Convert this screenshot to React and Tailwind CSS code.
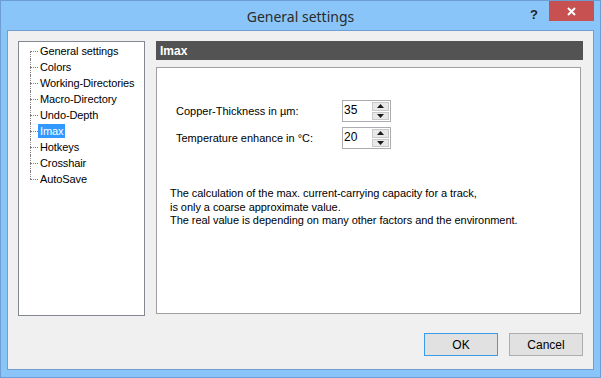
import React from "react";

const items = [
  "General settings",
  "Colors",
  "Working-Directories",
  "Macro-Directory",
  "Undo-Depth",
  "Imax",
  "Hotkeys",
  "Crosshair",
  "AutoSave",
];

function Spin({ value }) {
  return (
    <div className="flex h-[22px] w-[49px] items-stretch border border-[#abadb3] bg-white">
      <div className="flex-1 pl-[1px] text-[12px] leading-[19px] text-[#000]">{value}</div>
      <div className="my-[1px] mr-[1px] flex w-[17px] flex-col gap-[1px]">
        <div className="flex flex-1 items-center justify-center border border-[#c9c9c9] bg-[#e8e8e8]">
          <svg width="7" height="4" viewBox="0 0 7 4"><path d="M0 4 L3.5 0 L7 4 Z" fill="#1a1a1a" /></svg>
        </div>
        <div className="flex flex-1 items-center justify-center border border-[#c9c9c9] bg-[#e8e8e8]">
          <svg width="7" height="4" viewBox="0 0 7 4"><path d="M0 0 L3.5 4 L7 0 Z" fill="#1a1a1a" /></svg>
        </div>
      </div>
    </div>
  );
}

export default function App() {
  return (
    <div
      className="flex h-[378px] w-[601px] flex-col border border-[#6d9ed3] bg-[#89c5f8]"
      style={{ fontFamily: '"Liberation Sans", Arial, sans-serif' }}
    >
      {/* title bar */}
      <div className="relative flex h-[29px] items-center justify-center">
        <span
          className="mt-[1px] text-[14px] text-[#2b2b2b]"
          style={{ fontFamily: '"Noto Sans", "Open Sans", sans-serif' }}
        >
          General settings
        </span>
        <span className="absolute right-[62px] top-[4px] text-[13px] font-bold text-[#222]">?</span>
        <div className="absolute right-[6px] top-0 flex h-[20px] w-[45px] items-center justify-center bg-[#c75050]">
          <svg width="9" height="9" viewBox="0 0 9 9">
            <path d="M1 1 L8 8 M8 1 L1 8" stroke="#fff" strokeWidth="2" />
          </svg>
        </div>
      </div>

      {/* inner */}
      <div className="mx-[6px] flex h-[340px] flex-col border border-[#6f9fd0] bg-[#f0f0f0]">
        <div className="flex gap-[11px] pl-[10px] pt-[10px]">
          {/* tree */}
          <div className="h-[275px] w-[127px] border border-[#828790] bg-white pt-[1px] text-[11px] tracking-[-0.1px] text-black">
            {items.map((it, i) => (
              <div key={it} className="flex h-[16px] items-center">
                <div className="ml-[11px] flex h-[16px] w-[8px] flex-col">
                  <div className={"h-[8px] " + (i === 0 ? "" : "border-l border-dotted border-[#808080]")} />
                  <div
                    className={
                      "h-[8px] border-t border-dotted border-[#808080] " +
                      (i === items.length - 1 ? "" : "border-l")
                    }
                  />
                </div>
                <span
                  className={
                    "px-[2px] leading-[14px] " + (it === "Imax" ? "bg-[#3399ff] text-white" : "")
                  }
                >
                  {it}
                </span>
              </div>
            ))}
          </div>

          {/* right */}
          <div className="flex w-[427px] flex-col">
            <div className="flex h-[19px] items-center bg-[#535353] pl-[4px] text-[12px] font-bold text-white">
              Imax
            </div>
            <div className="mt-[7px] h-[247px] w-[425px] border border-[#a0a0a0] bg-white pl-[13px] pt-[32px] text-[11px] text-black">
              <div className="flex flex-col gap-[5px] pl-[6px]">
                <div className="flex items-center">
                  <span className="w-[166px]">Copper-Thickness in µm:</span>
                  <Spin value="35" />
                </div>
                <div className="flex items-center">
                  <span className="w-[166px]">Temperature enhance in °C:</span>
                  <Spin value="20" />
                </div>
              </div>
              <div className="mt-[38px] leading-[13.5px] tracking-[-0.05px]">
                <div>The calculation of the max. current-carrying capacity for a track,</div>
                <div>is only a coarse approximate value.</div>
                <div>The real value is depending on many other factors and the environment.</div>
              </div>
            </div>
          </div>
        </div>

        {/* buttons */}
        <div className="mt-[17px] flex justify-end gap-[11px] pr-[10px]">
          <div className="flex h-[23px] w-[74px] items-center justify-center border border-[#3c9be8] bg-[#e1e1e1] text-[12px] text-black">
            OK
          </div>
          <div className="flex h-[23px] w-[74px] items-center justify-center border border-[#adadad] bg-[#e1e1e1] text-[12px] text-black">
            Cancel
          </div>
        </div>
      </div>
    </div>
  );
}
